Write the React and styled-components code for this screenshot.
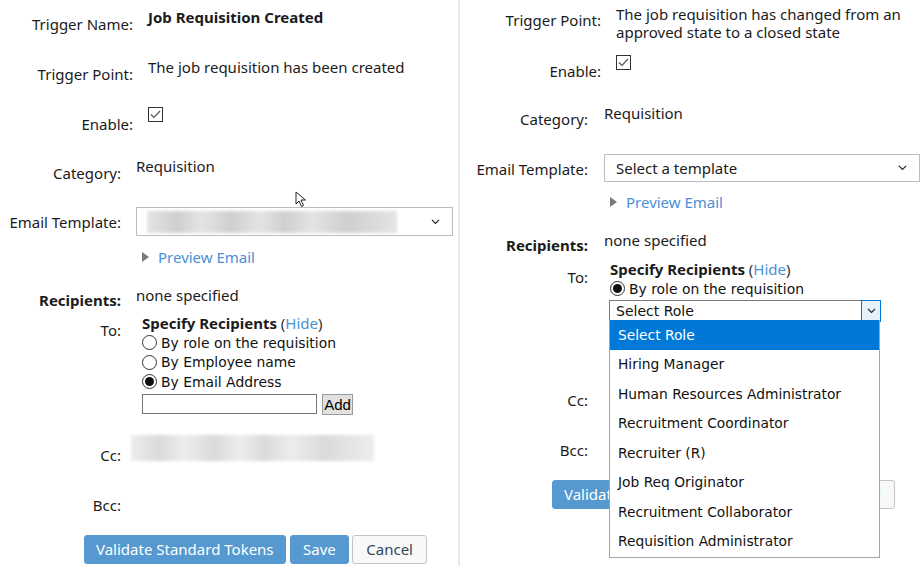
import React from 'react';
import styled, { createGlobalStyle } from 'styled-components';

const Global = createGlobalStyle`
  html, body { margin: 0; padding: 0; background: #fff; }
  body {
    width: 923px; height: 566px; overflow: hidden;
    font-family: "Noto Sans", "Open Sans", sans-serif;
    color: #1b1b1b;
  }
`;

const Page = styled.div`
  display: flex;
  width: 923px;
  height: 566px;
  position: relative;
`;

const Panel = styled.div`
  width: ${p => p.$w}px;
  flex-shrink: 0;
  display: flex;
  flex-direction: column;
  position: relative;
`;

const Divider = styled.div`
  width: 2px;
  flex-shrink: 0;
  background: #e8e8e8;
`;

const Row = styled.div`
  display: flex;
  height: ${p => p.$h}px;
  flex-shrink: 0;
`;

const Label = styled.div`
  width: ${p => p.$w}px;
  flex-shrink: 0;
  text-align: right;
  padding-top: ${p => p.$pt}px;
  font-size: 15px;
  line-height: 20px;
  font-weight: ${p => (p.$bold ? 700 : 400)};
  white-space: nowrap;
`;

const Value = styled.div`
  margin-left: ${p => p.$gap ?? 15}px;
  padding-top: ${p => p.$pt}px;
  font-size: 15px;
  line-height: ${p => p.$lh || 20}px;
  font-weight: ${p => (p.$bold ? 700 : 400)};
  flex: 1;
  min-width: 0;
  display: flex;
  flex-direction: column;
  align-items: flex-start;
`;

const Line = styled.span`
  display: block;
  height: 18px;
  line-height: 18px;
`;

const Check = styled.span`
  width: 15px;
  height: 15px;
  box-sizing: border-box;
  border: 1px solid #333;
  background: #fff;
  display: inline-flex;
  align-items: center;
  justify-content: center;
`;

const SelectBox = styled.div`
  width: ${p => p.$w}px;
  height: ${p => p.$h}px;
  box-sizing: border-box;
  border: 1px solid #bdbdbd;
  background: #fff;
  display: flex;
  align-items: center;
  padding: 0 12px 0 ${p => p.$pl}px;
  font-size: 15px;
`;

const SelectText = styled.span`
  flex: 1;
`;

const Blur = styled.div`
  width: ${p => p.$w}px;
  height: ${p => p.$h}px;
  margin-left: ${p => p.$ml || 0}px;
  background: linear-gradient(90deg,
    ${p => p.$a} 0%, ${p => p.$b} 12%, ${p => p.$a} 22%, ${p => p.$b} 34%,
    ${p => p.$a} 45%, ${p => p.$b} 55%, ${p => p.$a} 66%, ${p => p.$b} 80%, ${p => p.$a} 100%);
  filter: blur(1.5px);
`;

const Preview = styled.div`
  display: flex;
  align-items: center;
  gap: 9px;
  padding-left: 6px;
  color: #4a8fd8;
  font-size: 15px;
  line-height: 20px;
`;

const Triangle = styled.span`
  width: 0;
  height: 0;
  border-top: 5px solid transparent;
  border-bottom: 5px solid transparent;
  border-left: 7px solid #7a7a7a;
`;

const Link = styled.span`
  color: #4a8fd8;
  font-weight: 400;
`;

const Paren = styled.span`
  font-weight: 400;
  color: #333;
`;

const Indent = styled.div`
  padding-left: ${p => p.$pl ?? 6}px;
  display: flex;
  flex-direction: column;
  align-items: flex-start;
`;

const Specify = styled.div`
  font-weight: 700;
  font-size: 15px;
  line-height: 19px;
`;

const RadioRow = styled.label`
  display: flex;
  align-items: center;
  gap: 4px;
  height: 19.5px;
  font-family: "DejaVu Sans", Tahoma, sans-serif;
  font-size: 13.9px;
  color: #111;
`;

const Radio = styled.span`
  width: 15px;
  height: 15px;
  box-sizing: border-box;
  border-radius: 50%;
  border: 1px solid #333;
  background: #fff;
  display: inline-flex;
  align-items: center;
  justify-content: center;
  flex-shrink: 0;
  &::after {
    content: "";
    width: 9px;
    height: 9px;
    border-radius: 50%;
    background: #111;
    display: ${p => (p.$on ? 'block' : 'none')};
  }
`;

const AddRow = styled.div`
  display: flex;
  align-items: center;
  gap: 5px;
  margin-top: 2px;
`;

const TextInput = styled.div`
  width: 175px;
  height: 20px;
  box-sizing: border-box;
  border: 1px solid #767676;
  background: #fff;
`;

const AddButton = styled.div`
  width: 31px;
  height: 21px;
  box-sizing: border-box;
  border: 1px solid #9a9a9a;
  background: #e1e1e1;
  font-family: "Liberation Sans", Arial, sans-serif;
  font-size: 15px;
  line-height: 19px;
  text-align: center;
  color: #000;
`;

const RoleSelect = styled.div`
  width: 272px;
  height: 22px;
  box-sizing: border-box;
  border: 1px solid #7a7a7a;
  margin-left: -1px;
  margin-top: 1px;
  display: flex;
  align-items: stretch;
  background: #fff;
  font-family: "DejaVu Sans", Tahoma, sans-serif;
  font-size: 14px;
  color: #111;
`;

const RoleText = styled.span`
  flex: 1;
  padding-left: 6px;
  line-height: 20px;
`;

const RoleArrow = styled.span`
  width: 20px;
  box-sizing: border-box;
  border: 1px solid #0078d7;
  margin: -1px -1px -1px 0;
  background: #e5f1fb;
  display: flex;
  align-items: center;
  justify-content: center;
`;

const ButtonRow = styled.div`
  display: flex;
  gap: 4px;
  padding-left: ${p => p.$pl}px;
  padding-top: ${p => p.$pt}px;
`;

const Btn = styled.div`
  height: 29px;
  box-sizing: border-box;
  padding: 0 ${p => p.$px}px;
  margin-left: ${p => p.$ml || 0}px;
  border-radius: 3px;
  font-size: 15px;
  line-height: 27px;
  white-space: nowrap;
  border: 1px solid ${p => (p.$primary ? '#5599d0' : '#c4c4c4')};
  background: ${p => (p.$primary ? '#5599d0' : '#f8f8f8')};
  color: ${p => (p.$primary ? '#fff' : '#33475b')};
`;

const DropList = styled.div`
  position: absolute;
  left: 149px;
  top: 320px;
  width: 271px;
  height: 238px;
  box-sizing: border-box;
  border: 1px solid #a5a5a5;
  border-top: none;
  background: #fff;
  display: flex;
  flex-direction: column;
  font-family: "DejaVu Sans", Tahoma, sans-serif;
  font-size: 13.8px;
  z-index: 5;
`;

const DropItem = styled.div`
  height: 29.5px;
  flex-shrink: 0;
  padding-left: 8px;
  display: flex;
  align-items: center;
  background: ${p => (p.$active ? '#0078d7' : '#fff')};
  color: ${p => (p.$active ? '#fff' : '#111')};
`;

const Cursor = styled.svg`
  position: absolute;
  left: 295px;
  top: 191px;
  z-index: 6;
`;

const Chevron = ({ size = 9 }) => (
  <svg width={size} height={size * 0.6} viewBox="0 0 10 6">
    <path d="M1 1 L5 5 L9 1" fill="none" stroke="#222" strokeWidth="1.3" />
  </svg>
);

const CheckMark = () => (
  <svg width="11" height="9" viewBox="0 0 11 9">
    <path d="M1 4.5 L4 7.5 L10 1" fill="none" stroke="#555" strokeWidth="1.2" />
  </svg>
);

const roles = [
  'Select Role',
  'Hiring Manager',
  'Human Resources Administrator',
  'Recruitment Coordinator',
  'Recruiter (R)',
  'Job Req Originator',
  'Recruitment Collaborator',
  'Requisition Administrator',
];

function Buttons({ pl, pt }) {
  return (
    <ButtonRow $pl={pl} $pt={pt}>
      <Btn $primary $px={11}>Validate Standard Tokens</Btn>
      <Btn $primary $px={12.5}>Save</Btn>
      <Btn $px={13} $ml={-1}>Cancel</Btn>
    </ButtonRow>
  );
}

export default function App() {
  return (
    <>
      <Global />
      <Page>
        <Panel $w={458}>
          <Row $h={50}>
            <Label $w={133} $pt={14}>Trigger Name:</Label>
            <Value $pt={7} $bold>Job Requisition Created</Value>
          </Row>
          <Row $h={50}>
            <Label $w={133} $pt={14}>Trigger Point:</Label>
            <Value $pt={7}>The job requisition has been created</Value>
          </Row>
          <Row $h={49}>
            <Label $w={133} $pt={14}>Enable:</Label>
            <Value $pt={7}><Check><CheckMark /></Check></Value>
          </Row>
          <Row $h={51}>
            <Label $w={121} $pt={14}>Category:</Label>
            <Value $pt={7}>Requisition</Value>
          </Row>
          <Row $h={40}>
            <Label $w={121} $pt={12}>Email Template:</Label>
            <Value $pt={7}>
              <SelectBox $w={317} $h={29} $pl={10}>
                <SelectText>
                  <Blur $w={250} $h={22} $a="#e4e4e4" $b="#cfcfcf" />
                </SelectText>
                <Chevron />
              </SelectBox>
            </Value>
          </Row>
          <Row $h={40}>
            <Label $w={121} $pt={7}></Label>
            <Value $pt={7}>
              <Preview><Triangle />Preview Email</Preview>
            </Value>
          </Row>
          <Row $h={30}>
            <Label $w={121} $pt={10} $bold>Recipients:</Label>
            <Value $pt={5}>none specified</Value>
          </Row>
          <Row $h={115}>
            <Label $w={121} $pt={10}>To:</Label>
            <Value $pt={4}>
              <Indent>
                <Specify>Specify Recipients <Paren>(</Paren><Link>Hide</Link><Paren>)</Paren></Specify>
                <RadioRow><Radio />By role on the requisition</RadioRow>
                <RadioRow><Radio />By Employee name</RadioRow>
                <RadioRow><Radio $on />By Email Address</RadioRow>
                <AddRow>
                  <TextInput />
                  <AddButton>Add</AddButton>
                </AddRow>
              </Indent>
            </Value>
          </Row>
          <Row $h={55}>
            <Label $w={121} $pt={20}>Cc:</Label>
            <Value $pt={10}>
              <Blur $w={243} $h={26} $ml={-5} $a="#ededed" $b="#dadada" />
            </Value>
          </Row>
          <Row $h={50}>
            <Label $w={121} $pt={15}>Bcc:</Label>
            <Value $pt={15}></Value>
          </Row>
          <Buttons pl={84} pt={5} />
          <Cursor width="12" height="17" viewBox="0 0 12 17">
            <path d="M1 1 L1 13 L4 10 L6.5 15.5 L8.5 14.5 L6 9 L10.5 9 Z" fill="#fff" stroke="#222" strokeWidth="1" strokeLinejoin="round" />
          </Cursor>
        </Panel>
        <Divider />
        <Panel $w={463}>
          <Row $h={50}>
            <Label $w={141} $pt={10}>Trigger Point:</Label>
            <Value $pt={5} $lh={18}>
              <Line>The job requisition has changed from an</Line>
              <Line>approved state to a closed state</Line>
            </Value>
          </Row>
          <Row $h={48}>
            <Label $w={141} $pt={11}>Enable:</Label>
            <Value $pt={5}><Check><CheckMark /></Check></Value>
          </Row>
          <Row $h={51}>
            <Label $w={128} $pt={11}>Category:</Label>
            <Value $pt={5} $gap={16}>Requisition</Value>
          </Row>
          <Row $h={38}>
            <Label $w={128} $pt={10}>Email Template:</Label>
            <Value $pt={5} $gap={16}>
              <SelectBox $w={316} $h={28} $pl={11}>
                <SelectText>Select a template</SelectText>
                <Chevron />
              </SelectBox>
            </Value>
          </Row>
          <Row $h={38}>
            <Label $w={128} $pt={5}></Label>
            <Value $pt={5} $gap={16}>
              <Preview><Triangle />Preview Email</Preview>
            </Value>
          </Row>
          <Row $h={28}>
            <Label $w={128} $pt={10} $bold>Recipients:</Label>
            <Value $pt={5} $gap={16}>none specified</Value>
          </Row>
          <Row $h={123}>
            <Label $w={128} $pt={14}>To:</Label>
            <Value $pt={7} $gap={16}>
              <Indent>
                <Specify>Specify Recipients <Paren>(</Paren><Link>Hide</Link><Paren>)</Paren></Specify>
                <RadioRow><Radio $on />By role on the requisition</RadioRow>
                <RoleSelect>
                  <RoleText>Select Role</RoleText>
                  <RoleArrow><Chevron size={9} /></RoleArrow>
                </RoleSelect>
              </Indent>
            </Value>
          </Row>
          <Row $h={50}>
            <Label $w={128} $pt={14}>Cc:</Label>
            <Value $pt={14} $gap={16}></Value>
          </Row>
          <Row $h={54}>
            <Label $w={128} $pt={14}>Bcc:</Label>
            <Value $pt={14} $gap={16}></Value>
          </Row>
          <Buttons pl={92} pt={0} />
          <DropList>
            {roles.map((r, i) => (
              <DropItem key={r} $active={i === 0}>{r}</DropItem>
            ))}
          </DropList>
        </Panel>
      </Page>
    </>
  );
}
